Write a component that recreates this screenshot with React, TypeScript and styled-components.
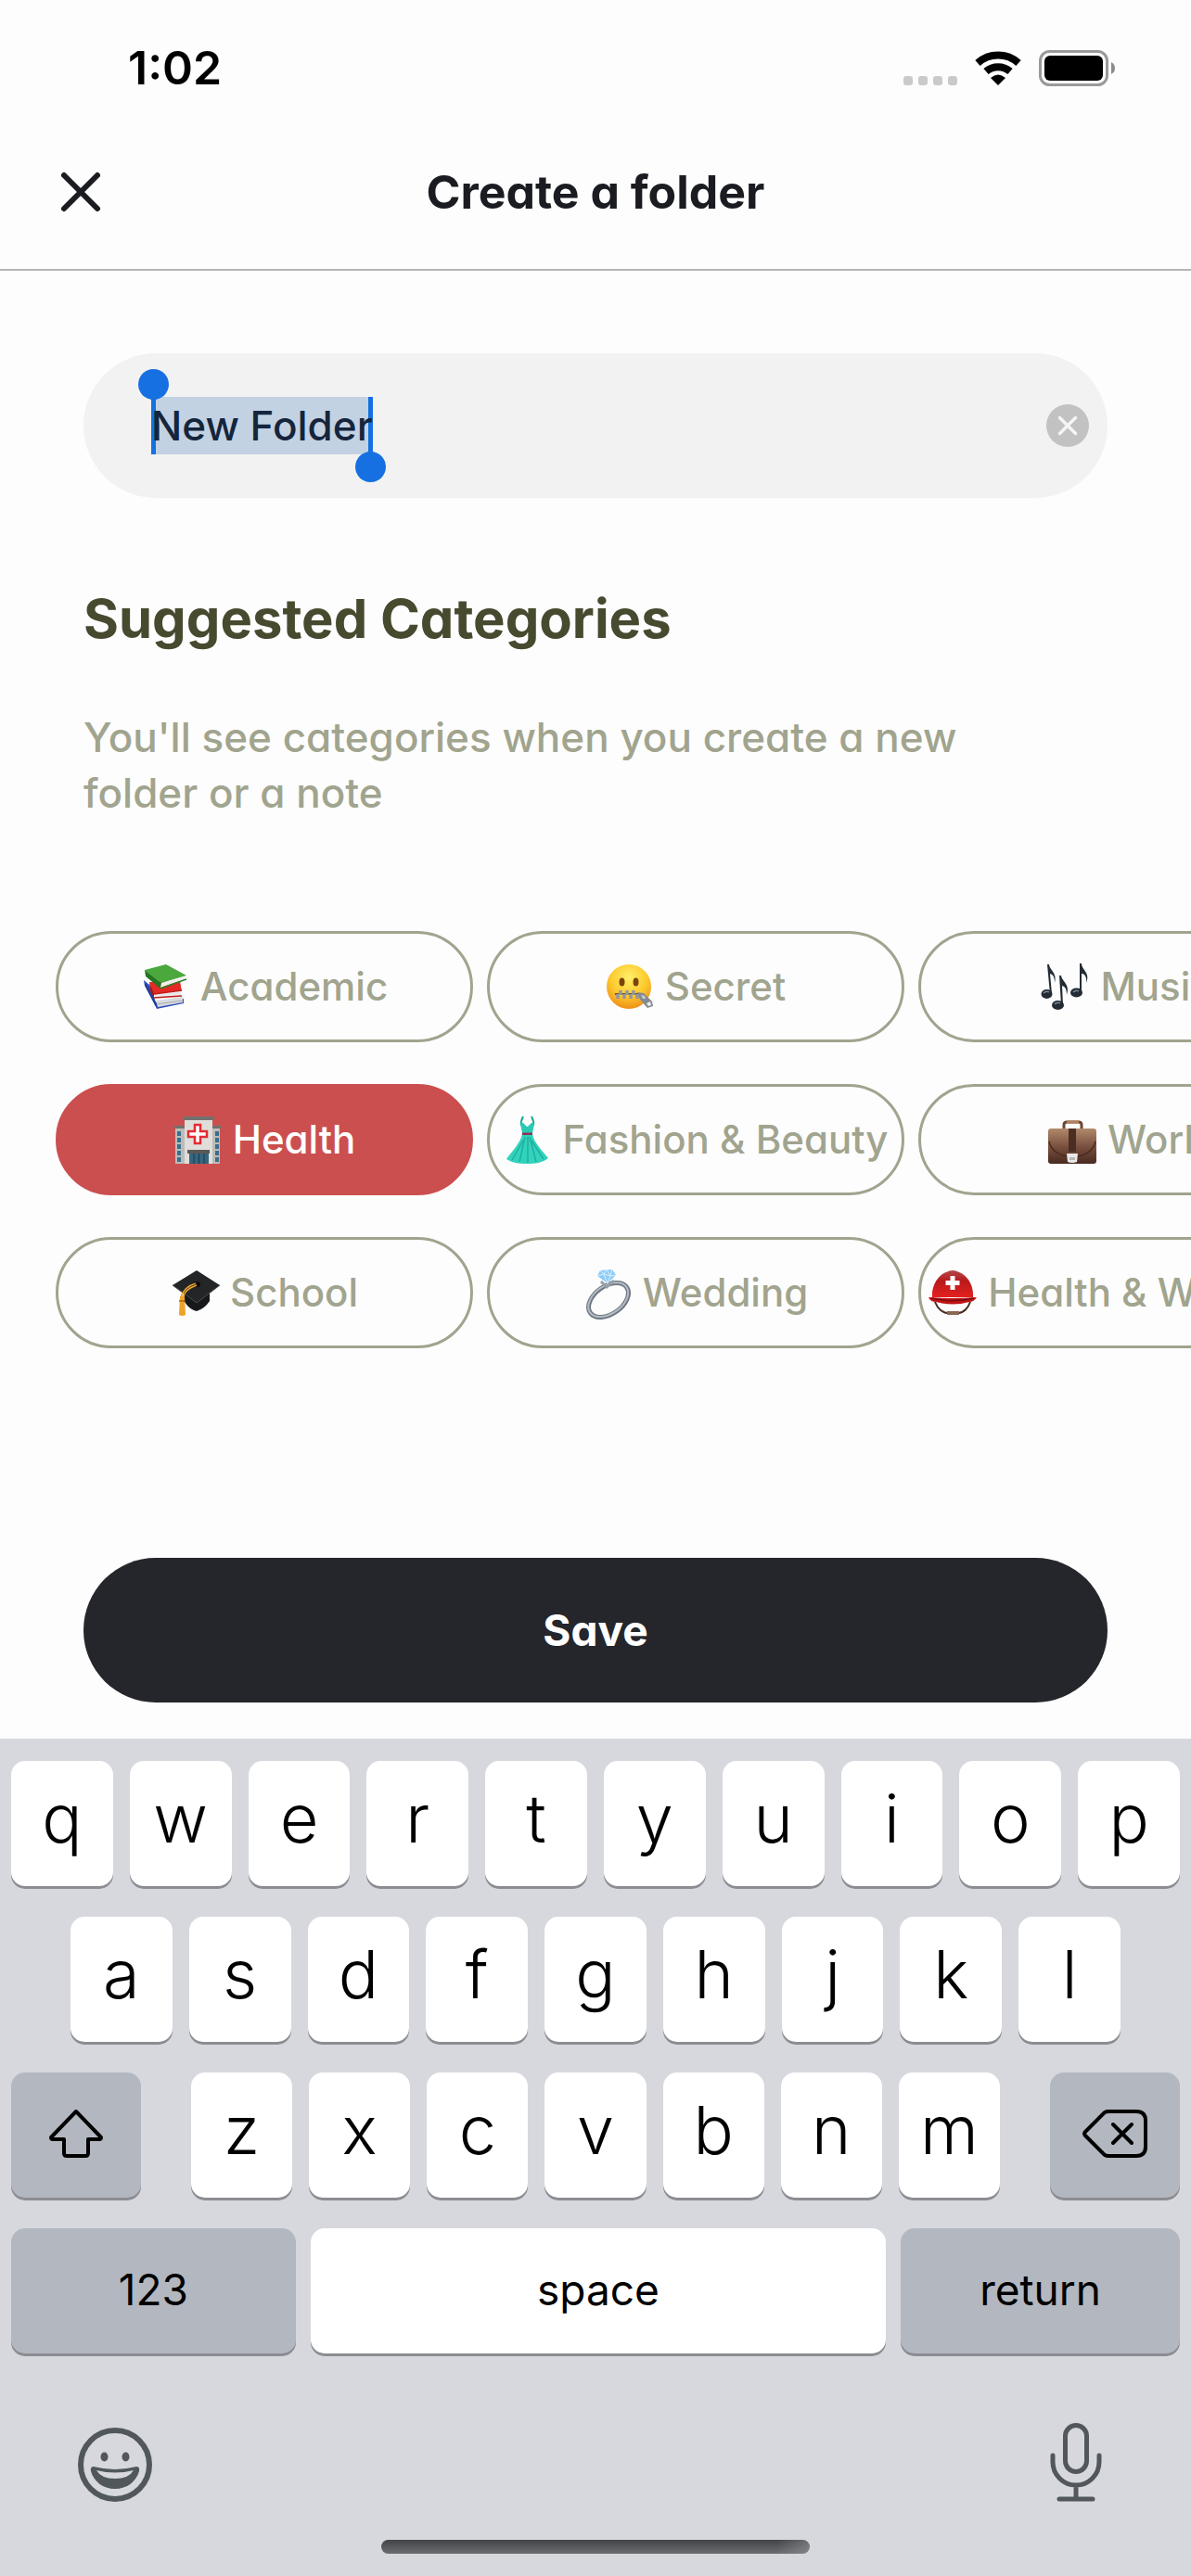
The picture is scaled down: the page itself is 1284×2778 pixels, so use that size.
import React, { useState } from 'react';
import styled, { createGlobalStyle } from 'styled-components';

const GlobalStyle = createGlobalStyle`
  * { box-sizing: border-box; }
  body {
    margin: 0;
    background: #fdfdfd;
    font-family: Inter, Roboto, sans-serif;
  }
  button, input { font: inherit; color: inherit; border: 0; margin: 0; padding: 0; background: none; }
  svg { display: block; flex: none; overflow: visible; }
`;

const Screen = styled.div`
  min-height: 100vh;
  display: flex;
  flex-direction: column;
  overflow: hidden;
`;

const StatusBar = styled.div`
  height: 146px;
  padding: 0 82px 0 138px;
  display: flex;
  align-items: center;
  justify-content: space-between;
`;

const Clock = styled.time`
  font-size: 50px;
  font-weight: 600;
  line-height: 60px;
  color: #000;
`;

const StatusIcons = styled.div`
  display: flex;
  align-items: center;
  gap: 19px;
`;

const Header = styled.header`
  height: 146px;
  padding: 0 60px 22px;
  display: grid;
  grid-template-columns: 54px 1fr 54px;
  align-items: center;
  border-bottom: 2px solid #b4b4b6;
`;

const IconButton = styled.button`
  display: grid;
  place-items: center;
`;

const Title = styled.h1`
  margin: 0;
  text-align: center;
  font-size: 50px;
  line-height: 60px;
  font-weight: 700;
  color: #1a1c21;
  font-feature-settings: 'cv11';
`;

const Main = styled.main`
  flex: 1;
  padding-top: 89px;
  display: flex;
  flex-direction: column;
  font-feature-settings: 'cv11';
`;

const NameField = styled.label`
  margin: 0 90px;
  height: 156px;
  padding: 0 20px 0 73px;
  border-radius: 78px;
  background: #f2f2f2;
  display: flex;
  align-items: center;
  justify-content: space-between;
`;

const Selection = styled.span`
  position: relative;
  height: 62px;
  background: #c3d2e3;
  box-shadow: inset 5px 0 #1670e2, inset -5px 0 #1670e2;
  display: flex;
  &::before, &::after {
    content: '';
    position: absolute;
    width: 33px;
    height: 33px;
    border-radius: 50%;
    background: #1670e2;
  }
  &::before { left: -14px; top: -30px; }
  &::after { right: -14px; bottom: -30px; }
`;

const NameInput = styled.input`
  field-sizing: content;
  font-size: 44px;
  font-weight: 500;
  color: #15253c;
  outline: none;
  font-feature-settings: 'cv11';
`;

const Heading = styled.h2`
  margin: 94px 90px 0;
  font-size: 58px;
  line-height: 72px;
  font-weight: 700;
  color: #474a2e;
`;

const Hint = styled.p`
  margin: 62px 150px 0 90px;
  font-size: 44px;
  line-height: 60px;
  font-weight: 500;
  color: #a1a48e;
`;

const Chips = styled.div`
  margin-top: 119px;
  padding: 0 60px;
  display: grid;
  grid-template-rows: repeat(3, 120px);
  grid-auto-flow: column;
  grid-auto-columns: 450px;
  gap: 45px 15px;
  overflow-x: auto;
  scrollbar-width: none;
`;

const Chip = styled.button<{ $selected: boolean }>`
  display: flex;
  align-items: center;
  justify-content: center;
  gap: 12px;
  border: 3px solid ${p => (p.$selected ? '#cb4f4f' : '#a1a48e')};
  border-radius: 60px;
  background: ${p => (p.$selected ? '#cb4f4f' : 'transparent')};
  color: ${p => (p.$selected ? '#fff' : '#a1a48e')};
  font-size: 42px;
  font-weight: 500;
  line-height: 60px;
  white-space: nowrap;
  font-feature-settings: 'cv11';
`;

const SaveButton = styled.button`
  margin: auto 90px 39px;
  height: 156px;
  border-radius: 78px;
  background: #25262b;
  color: #fff;
  font-size: 46px;
  font-weight: 700;
  font-feature-settings: 'cv11';
`;

const Keyboard = styled.section`
  padding: 24px 12px;
  background: #d7d8de;
  color: #000;
`;

const KeyRows = styled.div`
  display: grid;
  gap: 33px;
`;

const KeyRow = styled.div<{ $inset?: number }>`
  display: flex;
  gap: 18px;
  padding: 0 ${p => p.$inset ?? 0}px;
`;

const ShiftRow = styled.div`
  display: grid;
  grid-template-columns: 140fr 872fr 140fr;
  gap: 54px;
`;

const SpaceRow = styled.div`
  display: grid;
  grid-template-columns: 307fr 621fr 301fr;
  gap: 16px;
`;

const Key = styled.button<{ $dark?: boolean; $word?: boolean }>`
  flex: 1 1 0;
  min-width: 0;
  height: 135px;
  padding-bottom: ${p => (p.$word ? 4 : 12)}px;
  border-radius: 15px;
  display: flex;
  align-items: center;
  justify-content: center;
  background: ${p => (p.$dark ? '#b3b7c0' : '#fff')};
  box-shadow: 0 3px 0 #8b8d92;
  font-size: ${p => (p.$word ? 46 : 72)}px;
  font-weight: ${p => (p.$word ? 400 : 350)};
`;

const KeyboardFooter = styled.div`
  margin-top: 75px;
  padding: 0 84px 0 72px;
  height: 90px;
  display: flex;
  align-items: center;
  justify-content: space-between;
`;

const HomeIndicator = styled.div`
  width: 36vw;
  height: 15px;
  margin: 36px auto 0;
  border-radius: 8px;
  background: linear-gradient(100deg, transparent 92%, #9a9b9f88), linear-gradient(#424346, #6c6d70);
`;

/* Category pictures, each on a 52-unit square */

const Books = () => (
  <svg width="52" height="52" viewBox="0 0 52 52">
    <path d="M3 19 L9 24 L16 43 L46 39 L46 44 L17 50 Z" fill="#2c4fb8" />
    <path d="M16 41 L45 37 L45 43 L18 48 Z" fill="#d9dadd" />
    <path d="M17 45 L45 41" stroke="#a9abb0" />
    <path d="M3 19 L16 43 L18 50 L15 46 L4 25 Z" fill="#1d3a9a" />
    <path d="M9 21 L42 20 L44 31 L14 34 Z" fill="#e32a26" />
    <path d="M9 21 L14 33 L14 38 L10 31 Z" fill="#a81513" />
    <path d="M14 34 L43 30 L43 36 L15 38 Z" fill="#e9e9ea" />
    <path d="M14 34 L44 30 M14 38 L44 36" stroke="#c21d1a" strokeWidth="1.5" />
    <path d="M4 8 L27 2 L49 14 L22 22 Z" fill="#4aa83c" />
    <path d="M4 8 L22 22 L21 28 L5 15 Z" fill="#24761f" />
    <path d="M22 22 L47 15 L47 18 L21 27 Z" fill="#f0f0ee" />
    <path d="M21 28 L49 18" stroke="#2c8125" strokeWidth="1.5" />
  </svg>
);

const Zipper = () => (
  <svg width="52" height="52" viewBox="0 0 52 52">
    <defs>
      <radialGradient id="face" cx=".5" cy=".3" r=".7">
        <stop offset="0" stopColor="#fff06a" />
        <stop offset=".6" stopColor="#fdc82c" />
        <stop offset="1" stopColor="#ee8f18" />
      </radialGradient>
    </defs>
    <circle cx="25" cy="26" r="24" fill="url(#face)" />
    <ellipse cx="17.500" cy="21" rx="3" ry="4.500" fill="#7a4408" />
    <ellipse cx="32.500" cy="21" rx="3" ry="4.500" fill="#7a4408" />
    <path d="M10 34 H38" stroke="#6f5a28" strokeWidth="2" />
    <path d="M13 34v5 M16 30v5 M20 34v5 M23 30v5 M27 34v5 M30 30v5 M34 34v5" stroke="#92969e" strokeWidth="3.500" />
    <path d="M34 32 L41 33 L50 42 L51 47 L45 49 L37 40 Z" fill="#858a90" />
    <path d="M38 35 L42 36 L43 39 L40 39 Z" fill="#c9cbce" />
    <path d="M44 44 L48 42 L49 46 L46 47 Z" fill="#eee" />
  </svg>
);

const Notes = () => (
  <svg width="52" height="52" viewBox="0 0 52 52" fill="#232c35">
    <ellipse cx="6.500" cy="34" rx="6" ry="5" />
    <path d="M7 2 L9 2 C10 9 18 11 15 22 C15 15 13 13 10 12 L12 34 H10 Z" />
    <ellipse cx="18.500" cy="46" rx="6.500" ry="5" />
    <path d="M20 14 L22 14 C23 21 32 23 28 35 C28 28 26 26 23 25 L24 46 H22 Z" />
    <ellipse cx="38.500" cy="32.500" rx="6.500" ry="5" />
    <path d="M42 1 L44 1 C44 8 54 11 49 22 C50 15 47 12 44 12 L44 33 H42 Z" />
    <path d="M3 33 q3 -3 6 -1 M15 45 q3 -3 6 -1 M35 32 q3 -3 6 -1" stroke="#7b8894" strokeWidth="1.500" fill="none" />
  </svg>
);

const Hospital = () => (
  <svg width="52" height="52" viewBox="0 0 52 52">
    <path d="M2 13h48v39H2z" fill="#bdbbb8" />
    <path d="M1 11h11v3H1z M41 11h11v3H41z" fill="#74706e" />
    <path d="M12 4h30v48H12z" fill="#e0deda" />
    <path d="M10 1h34v4H10z" fill="#74706e" />
    <path d="M6 17v33 M47 17v33" stroke="#37708f" strokeWidth="4" strokeDasharray="5 2" />
    <path d="M23 10h6v7h7v6h-7v7h-6v-7h-7v-6h7z" fill="#fff" stroke="#e22c33" strokeWidth="2.500" />
    <path d="M15 37h24v4H15z" fill="#5b5857" />
    <path d="M17 41h21v11H17z" fill="#35657f" />
    <path d="M22 41v11 M27.500 41v11 M33 41v11" stroke="#1c3a4c" />
  </svg>
);

const Dress = () => (
  <svg width="52" height="52" viewBox="0 0 52 52">
    <path d="M19 11 C18 6 20 3 21 1 M32 11 C33 6 31 3 30 1" fill="none" stroke="#1fa996" strokeWidth="2" />
    <path d="M18 9 C21 5 23 11 25.500 12 C28 11 30 5 33 9 L31 19 H20 Z" fill="#2cc9b3" />
    <path d="M20 20 H31 C33 30 42 38 48 46 C42 51 34 52 25 52 C16 52 9 51 3 47 C9 38 18 30 20 20 Z" fill="#31d3bc" />
    <path d="M23 23 L17 50 M26 23 V51 M28 23 L35 50 M21 27 L9 48 M30 27 L43 47" stroke="#20b09d" strokeWidth="1.500" />
    <path d="M20 18.500 H31 V21 H20 Z" fill="#8c3357" />
  </svg>
);

const Briefcase = () => (
  <svg width="52" height="52" viewBox="0 0 52 52">
    <defs>
      <linearGradient id="leather" x2="0" y2="1">
        <stop offset="0" stopColor="#b08a6c" />
        <stop offset=".5" stopColor="#7b5140" />
        <stop offset="1" stopColor="#482a20" />
      </linearGradient>
    </defs>
    <path d="M17 14 V10 Q17 7 20 7 H33 Q36 7 36 10 V14" fill="none" stroke="#6d4533" strokeWidth="3" />
    <path d="M20 7 H33" stroke="#b0805f" strokeWidth="3" />
    <rect y="14" width="52" height="38" rx="3" fill="url(#leather)" />
    <path d="M1 28 C5 50 47 50 51 28" fill="none" stroke="#4c2c20" strokeWidth="1.500" />
    <path d="M22 14h8v25h-8z" fill="#4b2d22" />
    <path d="M20 41h12l-1 9q-5 2 -10 0z" fill="#eaeaea" />
    <path d="M23 45h6v3h-6z" fill="#b9b9ba" />
  </svg>
);

const GraduationCap = () => (
  <svg width="52" height="52" viewBox="0 0 52 52">
    <path d="M15 28 V36 Q20 44 28 46 Q37 43 42 35 V26 Z" fill="#17181a" />
    <path d="M2 18 L28 2 L53 18 L28 37 Z" fill="#242527" />
    <path d="M2 18 L28 37 L53 18" fill="none" stroke="#4b4c4f" />
    <ellipse cx="28" cy="17" rx="4" ry="3" fill="#0c0c0d" />
    <path d="M27 16 Q14 20 11 31 M28 18 Q16 22 13 31" fill="none" stroke="#eba32c" strokeWidth="1.500" />
    <path d="M10 30 h5 l1 20 q-4 2 -7 0 z" fill="#eda32b" />
    <path d="M9 35 h6" stroke="#a96912" strokeWidth="1.500" />
  </svg>
);

const Ring = () => (
  <svg width="52" height="52" viewBox="0 0 52 52">
    <g transform="rotate(-35 27 34)">
      <ellipse cx="27" cy="34" rx="24" ry="15" fill="none" stroke="#6e7883" strokeWidth="5" />
      <ellipse cx="27" cy="33.500" rx="24" ry="15" fill="none" stroke="#b4bbc3" strokeWidth="2" />
    </g>
    <path d="M19 14 L25 20 L33 13" fill="none" stroke="#969fa8" strokeWidth="3" />
    <path d="M18 2 L31 1 L35 7 L26 16 L15 8 Z" fill="#8ecbf8" />
    <path d="M15 8 L22 6 L29 8 L35 7 M18 2 L22 6 L25 1 L29 8 L31 1 M22 6 L26 16 L29 8" fill="none" stroke="#d8f0ff" />
  </svg>
);

const Helmet = () => (
  <svg width="52" height="52" viewBox="0 0 52 52">
    <defs>
      <linearGradient id="shell" x2="0" y2="1">
        <stop offset="0" stopColor="#b4484a" />
        <stop offset=".4" stopColor="#b91a1c" />
        <stop offset="1" stopColor="#e4211f" />
      </linearGradient>
    </defs>
    <path d="M7 36 C10 44 16 48 21 48 H32 C38 48 43 42 45 36" fill="none" stroke="#4a2a20" strokeWidth="2" />
    <path d="M20 48 H33" stroke="#8a6753" strokeWidth="4" />
    <path d="M4 31 C3 17 12 6 19 4 Q26 0 33 4 C41 7 49 17 48 31 Z" fill="url(#shell)" />
    <path d="M0 31 Q26 33 52 31 Q49 36 44 36 Q26 41 8 36 Q2 36 0 31 Z" fill="#c01316" />
    <path d="M3 32 Q26 37 49 32" fill="none" stroke="#7d0a0d" strokeWidth="1.500" />
    <path d="M23.500 8h5v5h5v5h-5v5h-5v-5h-5v-5h5z" fill="#fff" />
  </svg>
);

const categories: { name: string; icon: React.ReactNode }[] = [
  { name: 'Academic', icon: <Books /> },
  { name: 'Health', icon: <Hospital /> },
  { name: 'School', icon: <GraduationCap /> },
  { name: 'Secret', icon: <Zipper /> },
  { name: 'Fashion & Beauty', icon: <Dress /> },
  { name: 'Wedding', icon: <Ring /> },
  { name: 'Music', icon: <Notes /> },
  { name: 'Work', icon: <Briefcase /> },
  { name: 'Health & Wellness', icon: <Helmet /> },
];

const Signal = () => (
  <svg width="58" height="39" viewBox="0 0 58 39" fill="#cacaca">
    {[0, 16, 32, 48].map(x => <rect key={x} x={x} y="28" width="10" height="10" rx="3" />)}
  </svg>
);

const Wifi = () => (
  <svg width="50" height="39" viewBox="0 0 50 39">
    <path d="M3 14 A33 33 0 0 1 47 14" fill="none" stroke="#000" strokeWidth="8" />
    <path d="M12 23 A20 20 0 0 1 38 23" fill="none" stroke="#000" strokeWidth="8" />
    <path d="M17 30 Q25 23 33 30 L25 38 Z" />
  </svg>
);

const Battery = () => (
  <svg width="82" height="39" viewBox="0 0 82 39">
    <rect x="1.500" y="1.500" width="72" height="36" rx="10" fill="none" stroke="#9a9a9a" strokeWidth="3" />
    <rect x="6" y="6" width="63" height="27" rx="6" />
    <path d="M78 13 q4 2 4 6.500 t-4 6.500 z" fill="#8c8c8c" />
  </svg>
);

const CloseIcon = () => (
  <svg width="42" height="42" viewBox="0 0 42 42">
    <path d="M3 3 L39 39 M39 3 L3 39" stroke="#1a1c21" strokeWidth="6" strokeLinecap="round" />
  </svg>
);

const ClearIcon = () => (
  <svg width="46" height="46" viewBox="0 0 46 46">
    <circle cx="23" cy="23" r="23" fill="#c2c2c2" />
    <path d="M14.500 14.500 L31.500 31.500 M31.500 14.500 L14.500 31.500" stroke="#f5f5f5" strokeWidth="3.500" strokeLinecap="round" />
  </svg>
);

const ShiftIcon = () => (
  <svg width="60" height="54" viewBox="0 0 60 54">
    <path d="M30 3 L57 31 Q57 33 55 33 H43 V48 Q43 51 40 51 H20 Q17 51 17 48 V33 H5 Q3 33 3 31 Z" fill="none" stroke="#000" strokeWidth="4" strokeLinejoin="round" />
  </svg>
);

const DeleteIcon = () => (
  <svg width="70" height="52" viewBox="0 0 70 52">
    <path d="M28 2 H58 Q68 2 68 12 V40 Q68 50 58 50 H28 Q24 50 22 47 L3 28 Q1 26 3 24 L22 5 Q24 2 28 2 Z M33 16 L53 36 M53 16 L33 36" fill="none" stroke="#000" strokeWidth="4" strokeLinecap="round" />
  </svg>
);

const SmileIcon = () => (
  <svg width="80" height="80" viewBox="0 0 80 80">
    <circle cx="40" cy="40" r="37" fill="none" stroke="#51575c" strokeWidth="6" />
    <ellipse cx="28.500" cy="31.500" rx="4" ry="5" fill="#51575c" />
    <ellipse cx="51.500" cy="31.500" rx="4" ry="5" fill="#51575c" />
    <path d="M17 42 Q40 48 63 42 Q67 42 66 47 C63 58 53 66 40 66 C27 66 17 58 14 47 Q13 42 17 42 Z" fill="#51575c" />
    <path d="M20 46 Q40 51 60 46 Q55 55 40 55 Q25 55 20 46 Z" fill="#d7d8de" />
  </svg>
);

const MicIcon = () => (
  <svg width="56" height="90" viewBox="0 0 56 90">
    <path d="M3 35 V42 A25 25 0 0 0 53 42 V35 M28 68 V82 M10 82 H46" fill="none" stroke="#51575c" strokeWidth="5" strokeLinecap="round" />
    <rect x="16.500" y="2.500" width="23" height="50" rx="11.500" fill="none" stroke="#51575c" strokeWidth="5" />
  </svg>
);

const letters = (row: string) => row.split('').map(c => <Key key={c} type="button">{c}</Key>);

export default function App() {
  const [name, setName] = useState('New Folder');
  const [selected, setSelected] = useState('Health');

  return (
    <Screen>
      <GlobalStyle />
      <StatusBar>
        <Clock>1:02</Clock>
        <StatusIcons>
          <Signal />
          <Wifi />
          <Battery />
        </StatusIcons>
      </StatusBar>

      <Header>
        <IconButton type="button" aria-label="Close"><CloseIcon /></IconButton>
        <Title>Create a folder</Title>
      </Header>

      <Main>
        <NameField>
          <Selection>
            <NameInput aria-label="Folder name" value={name} onChange={e => setName(e.target.value)} />
          </Selection>
          <IconButton type="button" aria-label="Clear" onClick={() => setName('')}><ClearIcon /></IconButton>
        </NameField>

        <Heading>Suggested Categories</Heading>
        <Hint>You'll see categories when you create a new folder or a note</Hint>

        <Chips>
          {categories.map(c => (
            <Chip
              key={c.name}
              type="button"
              $selected={c.name === selected}
              aria-pressed={c.name === selected}
              onClick={() => setSelected(c.name)}
            >
              {c.icon}
              {c.name}
            </Chip>
          ))}
        </Chips>

        <SaveButton type="button">Save</SaveButton>
      </Main>

      <Keyboard aria-label="Keyboard">
        <KeyRows>
          <KeyRow>{letters('qwertyuiop')}</KeyRow>
          <KeyRow $inset={64}>{letters('asdfghjkl')}</KeyRow>
          <ShiftRow>
            <Key type="button" $dark $word aria-label="Shift"><ShiftIcon /></Key>
            <KeyRow>{letters('zxcvbnm')}</KeyRow>
            <Key type="button" $dark $word aria-label="Delete"><DeleteIcon /></Key>
          </ShiftRow>
          <SpaceRow>
            <Key type="button" $dark $word>123</Key>
            <Key type="button" $word>space</Key>
            <Key type="button" $dark $word>return</Key>
          </SpaceRow>
        </KeyRows>
        <KeyboardFooter>
          <IconButton type="button" aria-label="Emoji"><SmileIcon /></IconButton>
          <IconButton type="button" aria-label="Dictate"><MicIcon /></IconButton>
        </KeyboardFooter>
        <HomeIndicator />
      </Keyboard>
    </Screen>
  );
}
